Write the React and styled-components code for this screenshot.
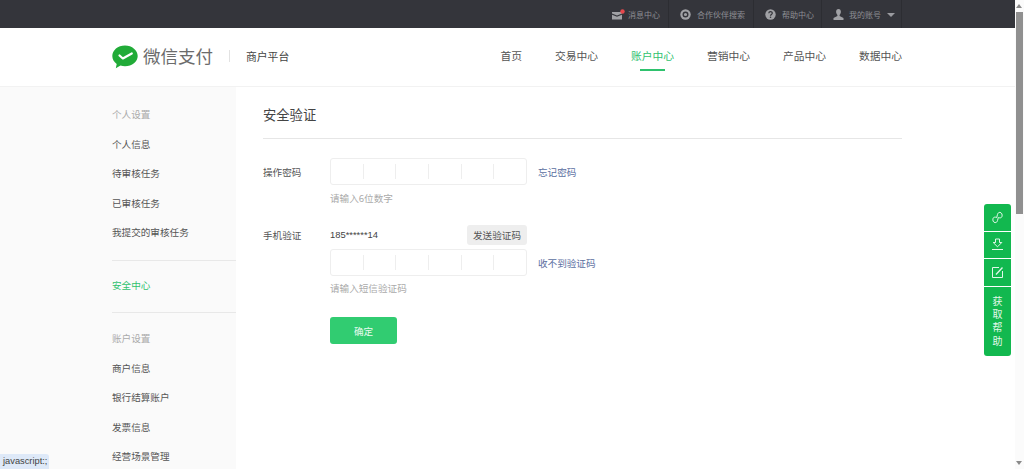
import React from "react";
import styled, { createGlobalStyle } from "styled-components";

const Global = createGlobalStyle`
  html, body { margin: 0; padding: 0; height: 469px; overflow: hidden; background: #fff; }
  body { font-family: "Noto Sans CJK SC", "Liberation Sans", sans-serif; color: #444; }
  * { box-sizing: border-box; }
`;

const Page = styled.div`
  width: 1024px;
  height: 469px;
  overflow: hidden;
  display: flex;
  flex-direction: column;
`;

const TopBar = styled.div`
  flex: 0 0 28px;
  background: #34353b;
  display: flex;
  justify-content: flex-end;
  padding-right: 122px;
`;

const TopItem = styled.a`
  width: ${p => p.$w}px;
  display: flex;
  align-items: center;
  gap: ${p => p.$gap || 6}px;
  padding-left: ${p => p.$pl || 11}px;
  border-right: 1px solid #2c2d32;
  font-size: 8px;
  color: #8d8e93;
`;

const Caret = styled.span`
  width: 0;
  height: 0;
  margin-left: 1px;
  margin-top: 2px;
  border-left: 4px solid transparent;
  border-right: 4px solid transparent;
  border-top: 4px solid #9a9ba0;
`;

const Header = styled.header`
  flex: 0 0 59px;
  background: #fff;
  border-bottom: 1px solid #f2f2f2;
  display: flex;
  align-items: center;
  padding: 0 122px 3px 112px;
`;

const LogoMark = styled.svg`
  margin-top: 2px;
`;

const LogoText = styled.span`
  margin-left: 5px;
  font-size: 17.5px;
  line-height: 24px;
  color: #6b6b6b;
  white-space: nowrap;
`;

const LogoDivider = styled.span`
  width: 1px;
  height: 12px;
  margin: 0 16px;
  background: #e2e2e2;
`;

const LogoSub = styled.span`
  font-size: 10.8px;
  color: #444;
  white-space: nowrap;
`;

const Nav = styled.nav`
  margin-left: auto;
  display: flex;
  gap: 33px;
`;

const NavItem = styled.a`
  position: relative;
  font-size: 10.75px;
  line-height: 16px;
  white-space: nowrap;
  color: ${p => (p.$active ? "#2fc26e" : "#555")};
  ${p =>
    p.$active &&
    `&::after {
      content: "";
      position: absolute;
      left: 9px;
      right: 9px;
      bottom: -7px;
      height: 2px;
      background: #2fc26e;
    }`}
`;

const Body = styled.div`
  flex: 1;
  display: flex;
  min-height: 0;
`;

const Sidebar = styled.aside`
  flex: 0 0 236px;
  background: #fafafa;
  padding: 13px 0 0 112px;
`;

const SideTitle = styled.div`
  height: 29.6px;
  line-height: 29.6px;
  font-size: 9.6px;
  color: #aaa;
`;

const SideItem = styled.a`
  display: block;
  height: 29.6px;
  line-height: 29.6px;
  font-size: 9.6px;
  color: ${p => (p.$active ? "#2fc26e" : "#555")};
`;

const SideDivider = styled.div`
  height: 1px;
  background: #e8e8e8;
  margin: ${p => p.$m};
`;

const Main = styled.main`
  flex: 1;
  padding: 0 122px 0 27px;
`;

const Title = styled.h1`
  margin: 0 0 19px;
  height: 52px;
  padding-top: 18px;
  border-bottom: 1px solid #e6e6e6;
  font-size: 13.3px;
  line-height: 20px;
  font-weight: 400;
  color: #444;
`;

const Row = styled.div`
  display: flex;
  align-items: center;
  margin-top: ${p => p.$mt || 0}px;
`;

const Label = styled.label`
  flex: 0 0 67px;
  font-size: 9.6px;
  color: #555;
`;

const Indented = styled.div`
  margin: ${p => p.$mt}px 0 0 67px;
  display: flex;
  align-items: center;
`;

const Cells = styled.div`
  width: 197px;
  height: 27px;
  border: 1px solid #eee;
  border-radius: 3px;
  display: flex;
  background: #fff;
`;

const Cell = styled.span`
  flex: 1;
  margin: 5px 0;
  & + & {
    border-left: 1px solid #eee;
  }
`;

const TextLink = styled.a`
  margin-left: 11px;
  font-size: 9.6px;
  color: #5b6f9f;
`;

const Hint = styled.div`
  margin: ${p => p.$m};
  padding-left: 67px;
  height: 14px;
  line-height: 14px;
  font-size: 9.6px;
  color: #aaa;
`;

const Phone = styled.span`
  width: 137px;
  margin-top: -1px;
  font-size: 9.4px;
  color: #444;
  font-family: "Liberation Sans", sans-serif;
`;

const SendButton = styled.button`
  width: 60px;
  height: 20px;
  border: 0;
  border-radius: 3px;
  padding: 0;
  background: #eee;
  font: inherit;
  font-size: 9.6px;
  color: #555;
`;

const Confirm = styled.button`
  width: 67px;
  height: 27px;
  border: 0;
  border-radius: 3px;
  padding: 0;
  background: #31cc71;
  font: inherit;
  font-size: 9.6px;
  color: #e9fbf0;
`;

const Float = styled.div`
  position: fixed;
  left: 984px;
  top: 204px;
  width: 27px;
  border-radius: 3px;
  overflow: hidden;
  display: flex;
  flex-direction: column;
  gap: 1px;
`;

const FloatButton = styled.a`
  height: 26.5px;
  background: #12b84f;
  display: flex;
  align-items: center;
  justify-content: center;
  color: #e3f7ea;
`;

const FloatText = styled.a`
  height: 69px;
  background: #12b84f;
  color: #e3f7ea;
  font-size: 10px;
  line-height: 13.4px;
  text-align: center;
  padding: 7px 8px 0;
`;

const Scrollbar = styled.div`
  position: fixed;
  left: 1015px;
  top: 0;
  width: 9px;
  height: 469px;
  background: #fbfbfb;
`;

const ScrollThumb = styled.div`
  position: absolute;
  left: 1px;
  top: 12px;
  width: 7px;
  height: 202px;
  background: #909090;
`;

const ScrollArrow = styled.div`
  position: absolute;
  left: 1px;
  ${p => (p.$down ? "bottom: 4px;" : "top: 4px;")}
  border-left: 3.500px solid transparent;
  border-right: 3.500px solid transparent;
  ${p => (p.$down ? "border-top" : "border-bottom")}: 4px solid #8a8a8a;
`;

const Tooltip = styled.div`
  position: fixed;
  left: 0;
  bottom: 0;
  width: 49px;
  height: 15px;
  padding-left: 3px;
  border-top-right-radius: 3px;
  background: #dee9f8;
  color: #444;
  font-family: "Liberation Sans", sans-serif;
  font-size: 9.3px;
  line-height: 15px;
`;

const WechatLogo = () => (
  <LogoMark width="26" height="24" viewBox="0 0 26 24">
    <path fill="#21ab38" d="M13 .5C5.900.5.300 5.200.300 11c0 3.200 1.700 6 4.400 7.900l-.9 4.300 4.700-2.600c1.400.4 2.900.6 4.500.6 7.100 0 12.700-4.700 12.700-10.200S20.100.500 13 .500z" />
    <path fill="none" stroke="#fff" strokeWidth="2.200" strokeLinecap="round" strokeLinejoin="round" d="M7.500 10.500l3.300 3 9-5" />
  </LogoMark>
);

const MailIcon = () => (
  <svg width="14" height="11" viewBox="0 0 14 11">
    <path fill="#a0a1a5" d="M0 3h10v1.500L5 6.500 0 4.500zM0 5.800l5 2 5-2V10.500H0z" />
    <circle cx="10.500" cy="2.500" r="2.200" fill="#e5484d" />
  </svg>
);

const TargetIcon = () => (
  <svg width="11" height="11" viewBox="0 0 11 11">
    <circle cx="5.500" cy="5.500" r="5.200" fill="#a0a1a5" />
    <circle cx="5.500" cy="5.500" r="2.300" fill="none" stroke="#34353b" strokeWidth="1.400" />
  </svg>
);

const HelpIcon = () => (
  <svg width="11" height="11" viewBox="0 0 11 11">
    <circle cx="5.500" cy="5.500" r="5.200" fill="#a0a1a5" />
    <path fill="none" stroke="#34353b" strokeWidth="1.200" d="M3.800 4.300c0-2.200 3.500-2.200 3.500 0 0 1.200-1.800 1.200-1.800 2.500" />
    <circle cx="5.500" cy="8.300" r=".8" fill="#34353b" />
  </svg>
);

const UserIcon = () => (
  <svg width="11" height="11" viewBox="0 0 11 11">
    <path fill="#a0a1a5" d="M5.500 0C3.900 0 3.100 1.200 3.100 2.800c0 1.300.6 2.500 1.300 3.100v1.200L.5 9v2h10V9L6.600 7.100V5.900c.7-.6 1.300-1.800 1.300-3.100C7.900 1.200 7.100 0 5.500 0z" />
  </svg>
);

const LinkIcon = () => (
  <svg width="13" height="13" viewBox="0 0 13 13" fill="none" stroke="currentColor" strokeWidth="1" strokeLinecap="round">
    <path d="M8 6.700c1 .5 2.600.2 3-1.300.5-1.700-.2-3.700-2-4-1.300-.2-2.200.8-2.500 2L5.700 6.500" />
    <path d="M5 6.300c-1-.5-2.600-.2-3 1.300-.5 1.700.2 3.700 2 4 1.300.2 2.200-.8 2.500-2l.8-3" />
  </svg>
);

const DownloadIcon = () => (
  <svg width="13" height="13" viewBox="0 0 13 13" fill="none" stroke="currentColor" strokeWidth="1" strokeLinejoin="round">
    <path d="M4.500 1h4v3.500h2.300L6.500 8.800 2.200 4.500h2.300z" />
    <path d="M1 11.500h11" />
  </svg>
);

const EditIcon = () => (
  <svg width="13" height="13" viewBox="0 0 13 13" fill="none" stroke="currentColor" strokeWidth="1">
    <path d="M8 1.500H1.500v10h10V5" />
    <path d="M5 8.500 11.500 1.500" strokeWidth="1.300" />
  </svg>
);

const SixCells = () => (
  <Cells>
    {[0, 1, 2, 3, 4, 5].map(i => (
      <Cell key={i} />
    ))}
  </Cells>
);

export default function App() {
  return (
    <Page>
      <Global />
      <TopBar>
        <TopItem $w={69} $pl={12} $gap={2}><MailIcon />消息中心</TopItem>
        <TopItem $w={85}><TargetIcon />合作伙伴搜索</TopItem>
        <TopItem $w={68}><HelpIcon />帮助中心</TopItem>
        <TopItem $w={80} $gap={5}><UserIcon />我的账号<Caret /></TopItem>
      </TopBar>
      <Header>
        <WechatLogo />
        <LogoText>微信支付</LogoText>
        <LogoDivider />
        <LogoSub>商户平台</LogoSub>
        <Nav>
          <NavItem>首页</NavItem>
          <NavItem>交易中心</NavItem>
          <NavItem $active>账户中心</NavItem>
          <NavItem>营销中心</NavItem>
          <NavItem>产品中心</NavItem>
          <NavItem>数据中心</NavItem>
        </Nav>
      </Header>
      <Body>
        <Sidebar>
          <SideTitle>个人设置</SideTitle>
          <SideItem>个人信息</SideItem>
          <SideItem>待审核任务</SideItem>
          <SideItem>已审核任务</SideItem>
          <SideItem>我提交的审核任务</SideItem>
          <SideDivider $m="12px 0 10px" />
          <SideItem $active>安全中心</SideItem>
          <SideDivider $m="11px 0 11.5px" />
          <SideTitle>账户设置</SideTitle>
          <SideItem>商户信息</SideItem>
          <SideItem>银行结算账户</SideItem>
          <SideItem>发票信息</SideItem>
          <SideItem>经营场景管理</SideItem>
        </Sidebar>
        <Main>
          <Title>安全验证</Title>
          <Row>
            <Label>操作密码</Label>
            <SixCells />
            <TextLink>忘记密码</TextLink>
          </Row>
          <Hint $m="6px 0 0">请输入6位数字</Hint>
          <Row $mt={20}>
            <Label>手机验证</Label>
            <Phone>185******14</Phone>
            <SendButton>发送验证码</SendButton>
          </Row>
          <Indented $mt={4}>
            <SixCells />
            <TextLink>收不到验证码</TextLink>
          </Indented>
          <Hint $m="5px 0 0">请输入短信验证码</Hint>
          <Indented $mt={22}>
            <Confirm>确定</Confirm>
          </Indented>
        </Main>
      </Body>
      <Float>
        <FloatButton><LinkIcon /></FloatButton>
        <FloatButton><DownloadIcon /></FloatButton>
        <FloatButton><EditIcon /></FloatButton>
        <FloatText>获取帮助</FloatText>
      </Float>
      <Scrollbar>
        <ScrollArrow />
        <ScrollThumb />
        <ScrollArrow $down />
      </Scrollbar>
      <Tooltip>javascript:;</Tooltip>
    </Page>
  );
}
